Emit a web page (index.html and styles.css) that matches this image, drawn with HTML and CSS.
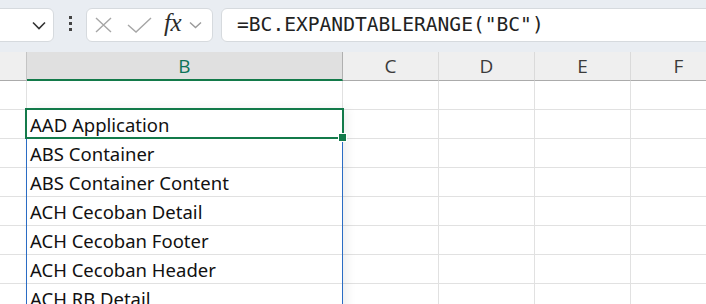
FILE: index.html
```html
<!DOCTYPE html>
<html lang="en">
<head>
    <meta charset="UTF-8">
    <title>Sheet</title>
    <link rel="stylesheet" href="styles.css">
</head>
<body>
    <div class="toolbar">
        <div class="namebox">
            <svg class="chev" width="14" height="9" viewBox="0 0 14 9"><path d="M1 1.5 L7 7.5 L13 1.5" fill="none" stroke="#333" stroke-width="1.6"/></svg>
        </div>
        <div class="dots"><span></span><span></span><span></span></div>
        <div class="fxbox">
            <svg class="ic-x" width="17" height="16" viewBox="0 0 17 16"><path d="M1 1 L16 15 M16 1 L1 15" stroke="#a6a6a6" stroke-width="1.4" fill="none"/></svg>
            <svg class="ic-ok" width="25" height="16" viewBox="0 0 25 16"><path d="M1 8 L9 15 L24 1" stroke="#a6a6a6" stroke-width="1.4" fill="none"/></svg>
            <span class="fx">fx</span>
            <svg class="ic-dd" width="13" height="8" viewBox="0 0 13 8"><path d="M1 1.5 L6.5 6.5 L12 1.5" fill="none" stroke="#9a9a9a" stroke-width="1.4"/></svg>
        </div>
        <div class="formula">=BC.EXPANDTABLERANGE("BC")</div>
    </div>

    <div class="sheet">
        <div class="grid">
            <div class="hd"></div>
            <div class="hd sel">B</div>
            <div class="hd">C</div>
            <div class="hd">D</div>
            <div class="hd">E</div>
            <div class="hd">F</div>

            <div class="c"></div><div class="c"></div><div class="c"></div><div class="c"></div><div class="c"></div><div class="c"></div>
            <div class="c"></div><div class="c">AAD Application</div><div class="c"></div><div class="c"></div><div class="c"></div><div class="c"></div>
            <div class="c"></div><div class="c">ABS Container</div><div class="c"></div><div class="c"></div><div class="c"></div><div class="c"></div>
            <div class="c"></div><div class="c">ABS Container Content</div><div class="c"></div><div class="c"></div><div class="c"></div><div class="c"></div>
            <div class="c"></div><div class="c">ACH Cecoban Detail</div><div class="c"></div><div class="c"></div><div class="c"></div><div class="c"></div>
            <div class="c"></div><div class="c">ACH Cecoban Footer</div><div class="c"></div><div class="c"></div><div class="c"></div><div class="c"></div>
            <div class="c"></div><div class="c">ACH Cecoban Header</div><div class="c"></div><div class="c"></div><div class="c"></div><div class="c"></div>
            <div class="c"></div><div class="c">ACH RB Detail</div><div class="c"></div><div class="c"></div><div class="c"></div><div class="c"></div>
        </div>
        <div class="spill"></div>
        <div class="active"><span class="handle"></span></div>
    </div>
</body>
</html>
```

FILE: styles.css
```css
html, body {
    margin: 0;
    padding: 0;
    overflow: hidden;
}

body {
    width: 706px;
    height: 304px;
    background: #fff;
    font-family: "Noto Sans", sans-serif;
}

.toolbar {
    height: 52px;
    background: #e9edf2;
    display: flex;
    align-items: flex-start;
    padding-top: 8px;
    box-sizing: border-box;
    overflow: hidden;
}

.namebox,
.fxbox,
.formula {
    height: 34px;
    box-sizing: border-box;
    background: #fff;
    border: 1px solid #d6dade;
    border-radius: 6px;
}

.namebox {
    width: 64px;
    margin-left: -10px;
    display: flex;
    align-items: center;
    justify-content: flex-end;
    padding-right: 7px;
}

.dots {
    width: 32px;
    display: flex;
    flex-direction: column;
    align-items: center;
    gap: 3px;
    padding-top: 8px;
}

.dots span {
    width: 3px;
    height: 3px;
    background: #444;
}

.fxbox {
    width: 127px;
    display: flex;
    align-items: center;
    padding-left: 8px;
}

.ic-ok {
    margin-left: 15px;
}

.fx {
    font-family: "Liberation Serif", serif;
    font-style: italic;
    font-size: 25px;
    color: #2b2b2b;
    margin-left: 12px;
    margin-top: -4px;
    letter-spacing: -0.5px;
}

.ic-dd {
    margin-left: 8px;
}

.formula {
    flex: 1;
    margin-left: 8px;
    margin-right: -10px;
    font-family: "DejaVu Sans Mono", monospace;
    font-size: 19.6px;
    color: #222;
    padding-left: 15px;
    line-height: 31px;
}

.sheet {
    position: relative;
}

.grid {
    display: grid;
    grid-template-columns: 27px 316px 96px 96px 96px 96px;
    grid-auto-rows: 29px;
}

.hd {
    background: #efefef;
    border-right: 1px solid #dadada;
    border-bottom: 1px solid #ababab;
    box-sizing: border-box;
    text-align: center;
    font-family: "Open Sans", sans-serif;
    font-size: 19px;
    line-height: 29px;
    color: #3b3b3b;
}

.hd:first-child {
    border-right-color: #c4c4c4;
}

.hd.sel {
    background: #e0e0e0;
    color: #0e7358;
    border-bottom: 2px solid #137a4a;
    border-right-color: #b0b0b0;
}

.c {
    border-right: 1px solid #e1e1e1;
    border-bottom: 1px solid #e1e1e1;
    box-sizing: border-box;
    font-size: 18.5px;
    line-height: 29px;
    padding-left: 3px;
    color: #111;
    white-space: nowrap;
    overflow: hidden;
}

.spill {
    position: absolute;
    left: 26px;
    top: 57px;
    width: 317px;
    height: 300px;
    box-sizing: border-box;
    border: 1px solid #2a6cc4;
    box-shadow: 4px 0 10px rgba(0, 0, 0, 0.07);
}

.active {
    position: absolute;
    left: 25px;
    top: 56px;
    width: 319px;
    height: 31px;
    box-sizing: border-box;
    border: 2px solid #137a4a;
}

.handle {
    position: absolute;
    right: -5px;
    bottom: -5px;
    width: 7px;
    height: 7px;
    background: #137a4a;
    border: 1px solid #fff;
}
```
